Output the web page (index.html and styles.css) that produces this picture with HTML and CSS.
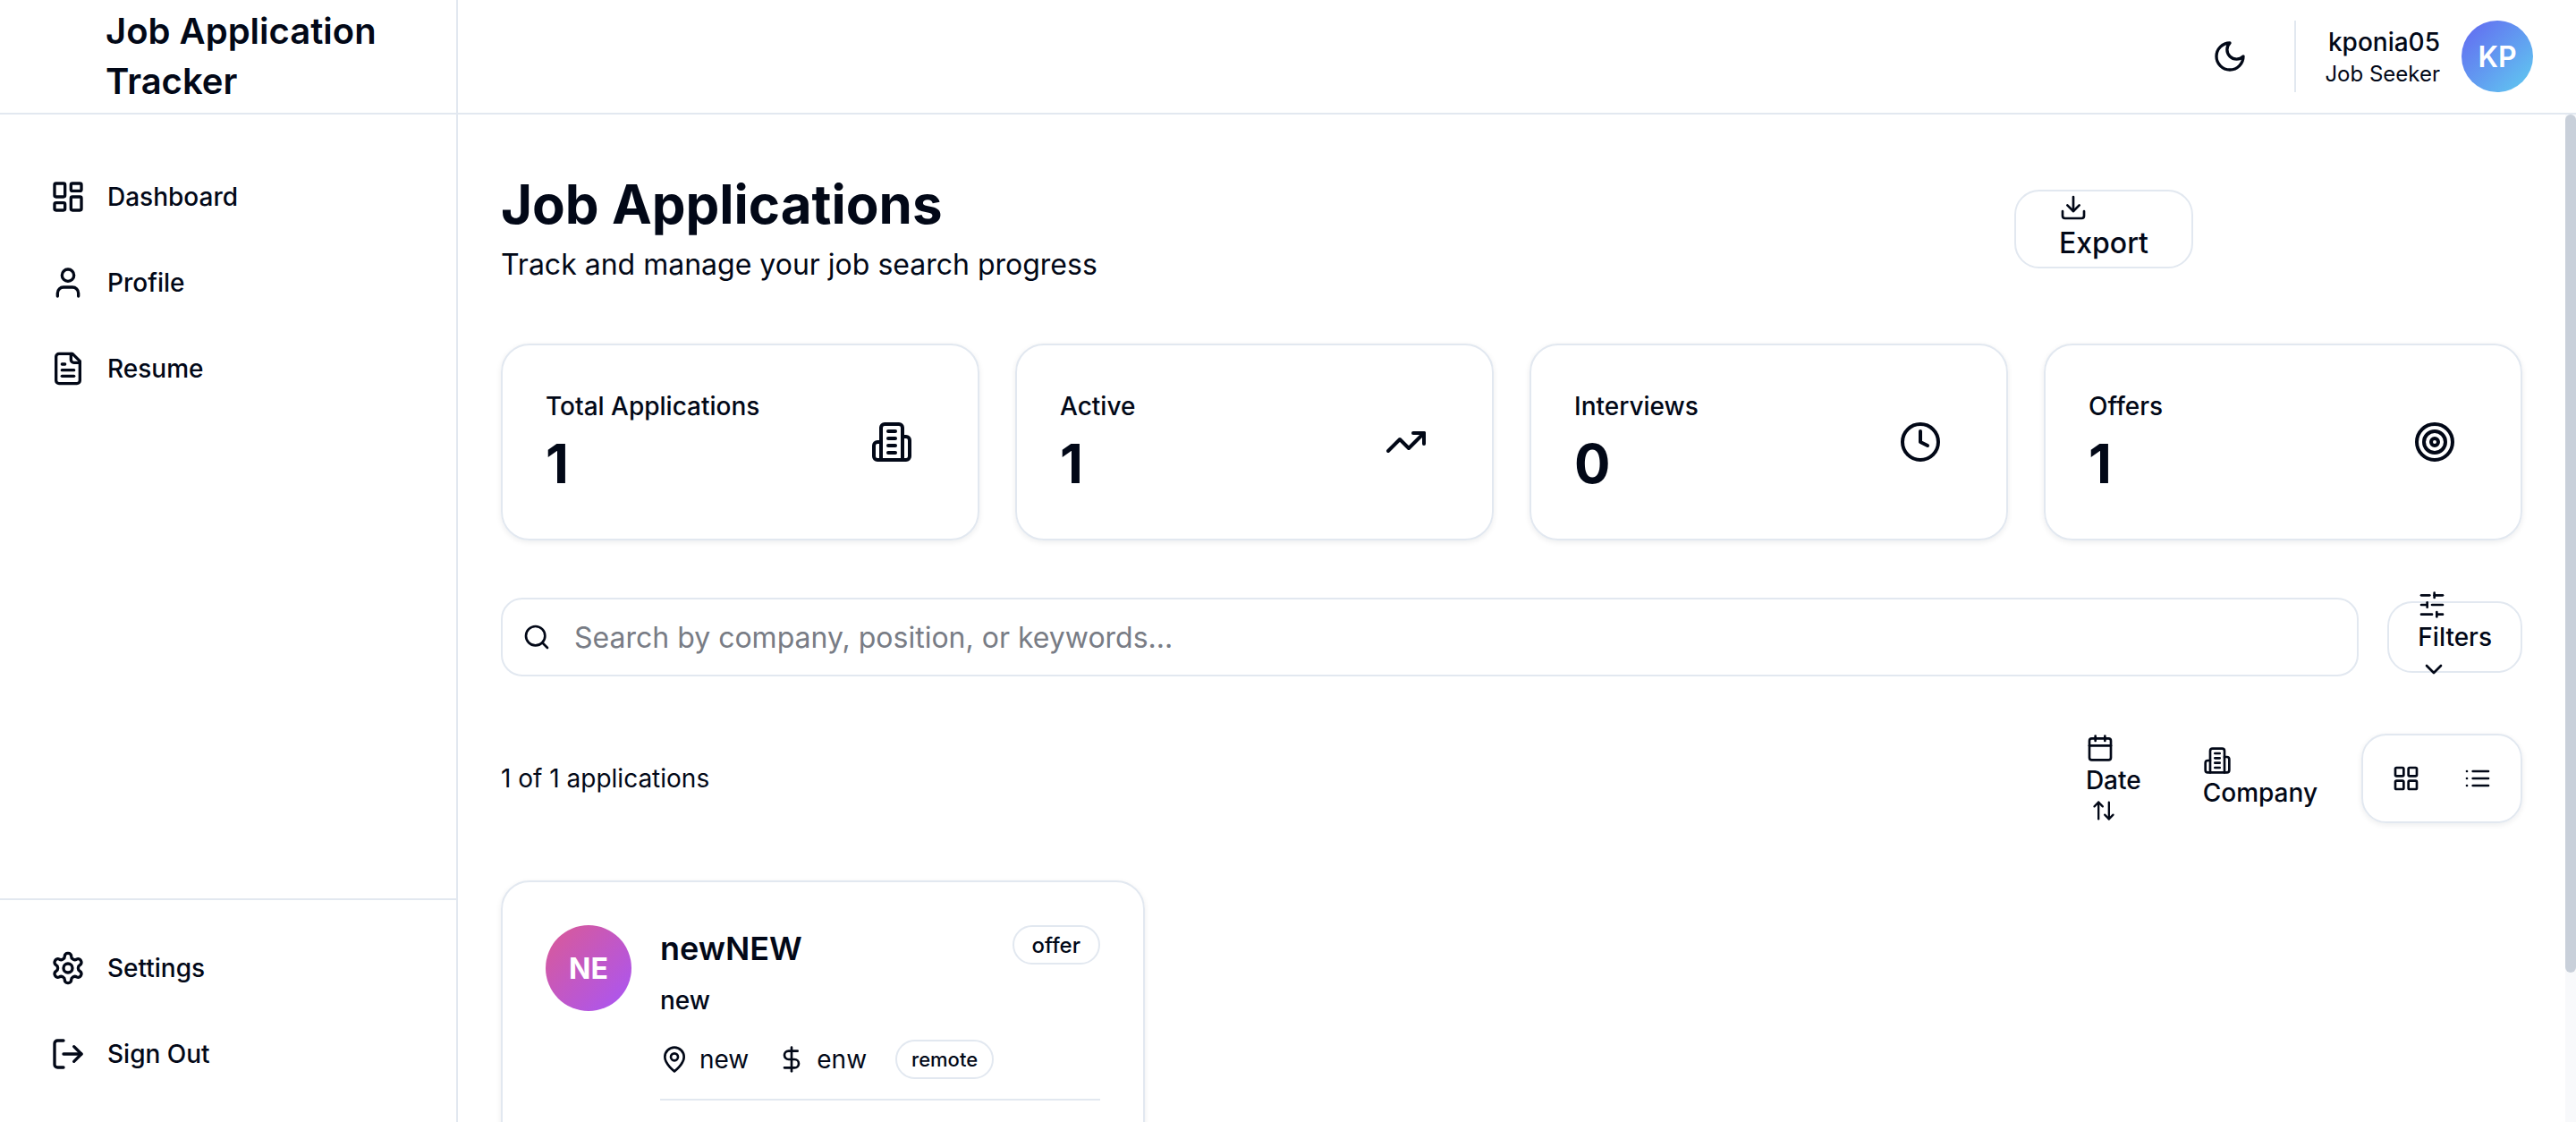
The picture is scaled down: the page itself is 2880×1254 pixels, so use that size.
FILE: index.html
```html
<!DOCTYPE html>
<html lang="en">
<head>
    <meta charset="UTF-8">
    <title>Job Application Tracker</title>
    <link rel="stylesheet" href="styles.css">
</head>
<body>

    <!-- Icon sprite -->
    <svg class="sprite" xmlns="http://www.w3.org/2000/svg">
        <symbol id="i-dashboard" viewBox="0 0 24 24"><rect x="3" y="3" width="7" height="9" rx="1"/><rect x="14" y="3" width="7" height="5" rx="1"/><rect x="14" y="12" width="7" height="9" rx="1"/><rect x="3" y="16" width="7" height="5" rx="1"/></symbol>
        <symbol id="i-user" viewBox="0 0 24 24"><path d="M19 21v-2a4 4 0 0 0-4-4H9a4 4 0 0 0-4 4v2"/><circle cx="12" cy="7" r="4"/></symbol>
        <symbol id="i-file" viewBox="0 0 24 24"><path d="M15 2H6a2 2 0 0 0-2 2v16a2 2 0 0 0 2 2h12a2 2 0 0 0 2-2V7Z"/><path d="M14 2v4a2 2 0 0 0 2 2h4"/><path d="M10 9H8"/><path d="M16 13H8"/><path d="M16 17H8"/></symbol>
        <symbol id="i-settings" viewBox="0 0 24 24"><path d="M12.22 2h-.44a2 2 0 0 0-2 2v.18a2 2 0 0 1-1 1.73l-.43.25a2 2 0 0 1-2 0l-.15-.08a2 2 0 0 0-2.73.73l-.22.38a2 2 0 0 0 .73 2.73l.15.1a2 2 0 0 1 1 1.72v.51a2 2 0 0 1-1 1.74l-.15.09a2 2 0 0 0-.73 2.73l.22.38a2 2 0 0 0 2.73.73l.15-.08a2 2 0 0 1 2 0l.43.25a2 2 0 0 1 1 1.73V20a2 2 0 0 0 2 2h.44a2 2 0 0 0 2-2v-.18a2 2 0 0 1 1-1.73l.43-.25a2 2 0 0 1 2 0l.15.08a2 2 0 0 0 2.73-.73l.22-.39a2 2 0 0 0-.73-2.73l-.15-.08a2 2 0 0 1-1-1.74v-.5a2 2 0 0 1 1-1.74l.15-.09a2 2 0 0 0 .73-2.73l-.22-.38a2 2 0 0 0-2.73-.73l-.15.08a2 2 0 0 1-2 0l-.43-.25a2 2 0 0 1-1-1.73V4a2 2 0 0 0-2-2z"/><circle cx="12" cy="12" r="3"/></symbol>
        <symbol id="i-logout" viewBox="0 0 24 24"><path d="M9 21H5a2 2 0 0 1-2-2V5a2 2 0 0 1 2-2h4"/><path d="m16 17 5-5-5-5"/><path d="M21 12H9"/></symbol>
        <symbol id="i-moon" viewBox="0 0 24 24"><path d="M12 3a6 6 0 0 0 9 9 9 9 0 1 1-9-9Z"/></symbol>
        <symbol id="i-download" viewBox="0 0 24 24"><path d="M21 15v4a2 2 0 0 1-2 2H5a2 2 0 0 1-2-2v-4"/><path d="m7 10 5 5 5-5"/><path d="M12 15V3"/></symbol>
        <symbol id="i-building" viewBox="0 0 24 24"><path d="M6 22V4a2 2 0 0 1 2-2h8a2 2 0 0 1 2 2v18Z"/><path d="M6 12H4a2 2 0 0 0-2 2v6a2 2 0 0 0 2 2h2"/><path d="M18 9h2a2 2 0 0 1 2 2v9a2 2 0 0 1-2 2h-2"/><path d="M10 6h4"/><path d="M10 10h4"/><path d="M10 14h4"/><path d="M10 18h4"/></symbol>
        <symbol id="i-trending" viewBox="0 0 24 24"><path d="M22 7 13.5 15.5 8.5 10.5 2 17"/><path d="M16 7h6v6"/></symbol>
        <symbol id="i-clock" viewBox="0 0 24 24"><circle cx="12" cy="12" r="10"/><path d="M12 6v6l4 2"/></symbol>
        <symbol id="i-target" viewBox="0 0 24 24"><circle cx="12" cy="12" r="10"/><circle cx="12" cy="12" r="6"/><circle cx="12" cy="12" r="2"/></symbol>
        <symbol id="i-search" viewBox="0 0 24 24"><circle cx="11" cy="11" r="8"/><path d="m21 21-4.3-4.3"/></symbol>
        <symbol id="i-sliders" viewBox="0 0 24 24"><path d="M21 4h-7"/><path d="M10 4H3"/><path d="M21 12h-9"/><path d="M8 12H3"/><path d="M21 20h-5"/><path d="M12 20H3"/><path d="M14 2v4"/><path d="M8 10v4"/><path d="M16 18v4"/></symbol>
        <symbol id="i-chevron" viewBox="0 0 24 24"><path d="m6 9 6 6 6-6"/></symbol>
        <symbol id="i-calendar" viewBox="0 0 24 24"><path d="M8 2v4"/><path d="M16 2v4"/><rect x="3" y="4" width="18" height="18" rx="2"/><path d="M3 10h18"/></symbol>
        <symbol id="i-updown" viewBox="0 0 24 24"><path d="m21 16-4 4-4-4"/><path d="M17 20V4"/><path d="m3 8 4-4 4 4"/><path d="M7 4v16"/></symbol>
        <symbol id="i-grid" viewBox="0 0 24 24"><rect x="3" y="3" width="7" height="7" rx="1"/><rect x="14" y="3" width="7" height="7" rx="1"/><rect x="14" y="14" width="7" height="7" rx="1"/><rect x="3" y="14" width="7" height="7" rx="1"/></symbol>
        <symbol id="i-list" viewBox="0 0 24 24"><path d="M8 6h13"/><path d="M8 12h13"/><path d="M8 18h13"/><path d="M3 6h.01"/><path d="M3 12h.01"/><path d="M3 18h.01"/></symbol>
        <symbol id="i-pin" viewBox="0 0 24 24"><path d="M20 10c0 6-8 12-8 12s-8-6-8-12a8 8 0 0 1 16 0Z"/><circle cx="12" cy="10" r="3"/></symbol>
        <symbol id="i-dollar" viewBox="0 0 24 24"><path d="M12 2v20"/><path d="M17 5H9.5a3.5 3.5 0 0 0 0 7h5a3.5 3.5 0 0 1 0 7H6"/></symbol>
    </svg>

    <div class="app">
        <!-- Top bar -->
        <div class="brand">
            <div class="brand-title">Job Application<br>Tracker</div>
        </div>
        <header class="topbar">
            <button class="theme-btn"><svg class="icon icon-40"><use href="#i-moon"/></svg></button>
            <div class="user-box">
                <div class="user-text">
                    <div class="user-name">kponia05</div>
                    <div class="user-role">Job Seeker</div>
                </div>
                <div class="avatar-kp">KP</div>
            </div>
        </header>

        <!-- Sidebar -->
        <aside class="sidebar">
            <nav class="nav-main">
                <a class="nav-link" href="#"><svg class="icon icon-40"><use href="#i-dashboard"/></svg>Dashboard</a>
                <a class="nav-link" href="#"><svg class="icon icon-40"><use href="#i-user"/></svg>Profile</a>
                <a class="nav-link" href="#"><svg class="icon icon-40"><use href="#i-file"/></svg>Resume</a>
            </nav>
            <nav class="nav-bottom">
                <a class="nav-link" href="#"><svg class="icon icon-40"><use href="#i-settings"/></svg>Settings</a>
                <a class="nav-link" href="#"><svg class="icon icon-40"><use href="#i-logout"/></svg>Sign Out</a>
            </nav>
        </aside>

        <!-- Main content -->
        <div class="main-wrap">
            <main class="main">
                <section class="page-head">
                    <div>
                        <h1>Job Applications</h1>
                        <p>Track and manage your job search progress</p>
                    </div>
                    <button class="export-btn">
                        <svg class="icon icon-32"><use href="#i-download"/></svg>
                        <span>Export</span>
                    </button>
                </section>

                <section class="stats">
                    <div class="stat-card">
                        <div>
                            <div class="stat-label">Total Applications</div>
                            <div class="stat-value">1</div>
                        </div>
                        <svg class="icon icon-48"><use href="#i-building"/></svg>
                    </div>
                    <div class="stat-card">
                        <div>
                            <div class="stat-label">Active</div>
                            <div class="stat-value">1</div>
                        </div>
                        <svg class="icon icon-48"><use href="#i-trending"/></svg>
                    </div>
                    <div class="stat-card">
                        <div>
                            <div class="stat-label">Interviews</div>
                            <div class="stat-value">0</div>
                        </div>
                        <svg class="icon icon-48"><use href="#i-clock"/></svg>
                    </div>
                    <div class="stat-card">
                        <div>
                            <div class="stat-label">Offers</div>
                            <div class="stat-value">1</div>
                        </div>
                        <svg class="icon icon-48"><use href="#i-target"/></svg>
                    </div>
                </section>

                <section class="search-row">
                    <label class="search-box">
                        <svg class="icon icon-32"><use href="#i-search"/></svg>
                        <input type="text" placeholder="Search by company, position, or keywords...">
                    </label>
                    <button class="filter-btn">
                        <svg class="icon icon-32"><use href="#i-sliders"/></svg>
                        <span>Filters</span>
                        <svg class="icon icon-32"><use href="#i-chevron"/></svg>
                    </button>
                </section>

                <section class="list-tools">
                    <div class="count">1 of 1 applications</div>
                    <div class="tools-right">
                        <button class="sort-btn">
                            <svg class="icon icon-32"><use href="#i-calendar"/></svg>
                            <span>Date</span>
                            <svg class="icon icon-28 sort-arrows"><use href="#i-updown"/></svg>
                        </button>
                        <button class="sort-btn">
                            <svg class="icon icon-32"><use href="#i-building"/></svg>
                            <span>Company</span>
                        </button>
                        <div class="view-toggle">
                            <button class="view-btn"><svg class="icon icon-32"><use href="#i-grid"/></svg></button>
                            <button class="view-btn"><svg class="icon icon-32"><use href="#i-list"/></svg></button>
                        </div>
                    </div>
                </section>

                <section class="app-card">
                    <div class="avatar-ne">NE</div>
                    <div class="app-body">
                        <div class="app-top">
                            <div class="app-title">newNEW</div>
                            <span class="badge">offer</span>
                        </div>
                        <div class="app-role">new</div>
                        <div class="app-meta">
                            <span class="meta-item"><svg class="icon icon-32"><use href="#i-pin"/></svg>new</span>
                            <span class="meta-item"><svg class="icon icon-32"><use href="#i-dollar"/></svg>enw</span>
                            <span class="badge badge-small">remote</span>
                        </div>
                        <div class="app-divider"></div>
                    </div>
                </section>
            </main>

            <!-- Scrollbar -->
            <div class="scroll-track">
                <div class="scroll-thumb"></div>
            </div>
        </div>
    </div>

</body>
</html>
```

FILE: styles.css
```css
/* Root Variables */
:root {
    --text: #020817;
    --border: #e2e8f0;
    --muted: #787c85;
}

/* General Styles */
* {
    box-sizing: border-box;
}

body {
    margin: 0;
    height: 100vh;
    overflow: hidden;
    background: #fff;
    color: var(--text);
    font-family: Inter, 'Noto Sans', sans-serif;
}

button {
    background: none;
    border: none;
    padding: 0;
    color: inherit;
    font: inherit;
    text-align: left;
}

.sprite {
    display: none;
}

.icon {
    display: block;
    flex: none;
    fill: none;
    stroke: currentColor;
    stroke-width: 2;
    stroke-linecap: round;
    stroke-linejoin: round;
}

.icon-28 { width: 28px; height: 28px; }
.icon-32 { width: 32px; height: 32px; }
.icon-40 { width: 40px; height: 40px; }
.icon-48 { width: 48px; height: 48px; }

/* App Frame */
.app {
    display: grid;
    grid-template-columns: 512px 1fr;
    grid-template-rows: 128px 1fr;
    height: 100vh;
}

.brand {
    display: flex;
    align-items: center;
    padding-left: 118px;
    border-right: 2px solid var(--border);
    border-bottom: 2px solid var(--border);
}

.brand-title {
    font-size: 40px;
    line-height: 56px;
    font-weight: 600;
}

.topbar {
    display: flex;
    align-items: center;
    justify-content: flex-end;
    padding-right: 48px;
    border-bottom: 2px solid var(--border);
}

.theme-btn {
    margin-right: 52px;
}

.user-box {
    display: flex;
    align-items: center;
    gap: 24px;
    height: 80px;
    padding-left: 32px;
    border-left: 2px solid var(--border);
}

.user-text {
    text-align: right;
}

.user-name {
    font-size: 28px;
    line-height: 40px;
    font-weight: 500;
}

.user-role {
    font-size: 24px;
    line-height: 32px;
}

.avatar-kp {
    display: flex;
    align-items: center;
    justify-content: center;
    width: 80px;
    height: 80px;
    border-radius: 50%;
    background: linear-gradient(135deg, #6366f1, #60cdf0);
    color: #fff;
    font-size: 32px;
    font-weight: 600;
}

/* Sidebar */
.sidebar {
    display: flex;
    flex-direction: column;
    justify-content: space-between;
    border-right: 2px solid var(--border);
}

.nav-main {
    display: flex;
    flex-direction: column;
    gap: 8px;
    padding: 48px 32px 0;
}

.nav-bottom {
    display: flex;
    flex-direction: column;
    gap: 8px;
    padding: 32px;
    border-top: 2px solid var(--border);
}

.nav-link {
    display: flex;
    align-items: center;
    gap: 24px;
    height: 88px;
    padding: 0 24px;
    color: var(--text);
    font-size: 28px;
    font-weight: 500;
    text-decoration: none;
}

/* Main Content */
.main-wrap {
    display: flex;
    min-width: 0;
    min-height: 0;
}

.main {
    flex: 1;
    min-width: 0;
    overflow: hidden;
    padding: 64px 48px 48px;
}

.scroll-track {
    flex: none;
    width: 12px;
    background: #f8f9fb;
}

.scroll-thumb {
    height: 959px;
    background: #c9d0da;
    border-radius: 6px;
}

.page-head {
    display: flex;
    align-items: center;
    justify-content: space-between;
    padding-right: 368px;
    margin-bottom: 64px;
}

h1 {
    margin: 0 0 8px;
    font-size: 60px;
    line-height: 72px;
    font-weight: 700;
}

.page-head p {
    margin: 0;
    font-size: 32px;
    line-height: 48px;
}

.export-btn {
    height: 88px;
    padding: 0 48px;
    border: 2px solid var(--border);
    border-radius: 28px;
    font-size: 32px;
    line-height: 48px;
    font-weight: 500;
}

/* Stat Cards */
.stats {
    display: grid;
    grid-template-columns: repeat(4, 1fr);
    gap: 40px;
    margin-bottom: 64px;
}

.stat-card {
    display: flex;
    align-items: center;
    justify-content: space-between;
    height: 220px;
    padding: 0 72px 0 48px;
    border: 2px solid var(--border);
    border-radius: 32px;
    box-shadow: 0 2px 6px rgba(15, 23, 42, 0.08);
}

.stat-label {
    margin-bottom: 8px;
    font-size: 28px;
    line-height: 40px;
    font-weight: 500;
}

.stat-value {
    font-size: 60px;
    line-height: 72px;
    font-weight: 700;
}

/* Search Row */
.search-row {
    display: flex;
    align-items: center;
    gap: 32px;
    margin-bottom: 64px;
}

.search-box {
    flex: 1;
    display: flex;
    align-items: center;
    gap: 26px;
    height: 88px;
    padding: 0 24px 0 22px;
    border: 2px solid var(--border);
    border-radius: 24px;
}

.search-box input {
    flex: 1;
    border: none;
    outline: none;
    padding: 0;
    background: none;
    color: var(--text);
    font-family: inherit;
    font-size: 32px;
}

.search-box input::placeholder {
    color: var(--muted);
    opacity: 1;
}

.filter-btn {
    display: flex;
    flex-direction: column;
    justify-content: center;
    align-items: flex-start;
    height: 80px;
    padding: 0 32px;
    border: 2px solid var(--border);
    border-radius: 28px;
    font-size: 28px;
    line-height: 40px;
    font-weight: 500;
}

.filter-btn .icon:last-child {
    margin-left: 2px;
}

/* Toolbar above the list */
.list-tools {
    display: flex;
    align-items: center;
    justify-content: space-between;
    margin-bottom: 64px;
}

.count {
    font-size: 28px;
    font-weight: 400;
}

.tools-right {
    display: flex;
    align-items: center;
    gap: 5px;
}

.sort-btn {
    padding: 0 32px;
    font-size: 28px;
    line-height: 40px;
    font-weight: 500;
}

.sort-btn span {
    display: block;
}

.sort-arrows {
    margin: 0 0 0 6px;
}

.view-toggle {
    display: flex;
    margin-left: 12px;
    padding: 8px;
    border: 2px solid var(--border);
    border-radius: 28px;
    box-shadow: 0 2px 6px rgba(15, 23, 42, 0.08);
}

.view-btn {
    display: flex;
    align-items: center;
    justify-content: center;
    width: 80px;
    height: 80px;
}

/* Application Card */
.app-card {
    display: flex;
    gap: 32px;
    width: 720px;
    height: 418px;
    padding: 48px;
    border: 2px solid var(--border);
    border-radius: 32px;
    box-shadow: 0 2px 6px rgba(15, 23, 42, 0.08);
}

.avatar-ne {
    display: flex;
    flex: none;
    align-items: center;
    justify-content: center;
    width: 96px;
    height: 96px;
    border-radius: 50%;
    background: linear-gradient(135deg, #db5a94, #a855f7);
    color: #fff;
    font-size: 32px;
    font-weight: 700;
}

.app-body {
    flex: 1;
}

.app-top {
    display: flex;
    align-items: flex-start;
    justify-content: space-between;
}

.app-title {
    margin-top: 6px;
    font-size: 36px;
    line-height: 40px;
    font-weight: 600;
}

.badge {
    display: inline-flex;
    align-items: center;
    height: 44px;
    padding: 0 20px;
    border: 2px solid var(--border);
    border-radius: 22px;
    font-size: 24px;
    font-weight: 500;
}

.badge-small {
    padding: 0 16px;
    font-size: 22px;
}

.app-role {
    margin-top: 18px;
    font-size: 28px;
    line-height: 40px;
    font-weight: 500;
}

.app-meta {
    display: flex;
    align-items: center;
    gap: 32px;
    margin-top: 24px;
    font-size: 28px;
}

.meta-item {
    display: flex;
    align-items: center;
    gap: 12px;
}

.app-divider {
    height: 2px;
    margin-top: 22px;
    background: var(--border);
}
```
